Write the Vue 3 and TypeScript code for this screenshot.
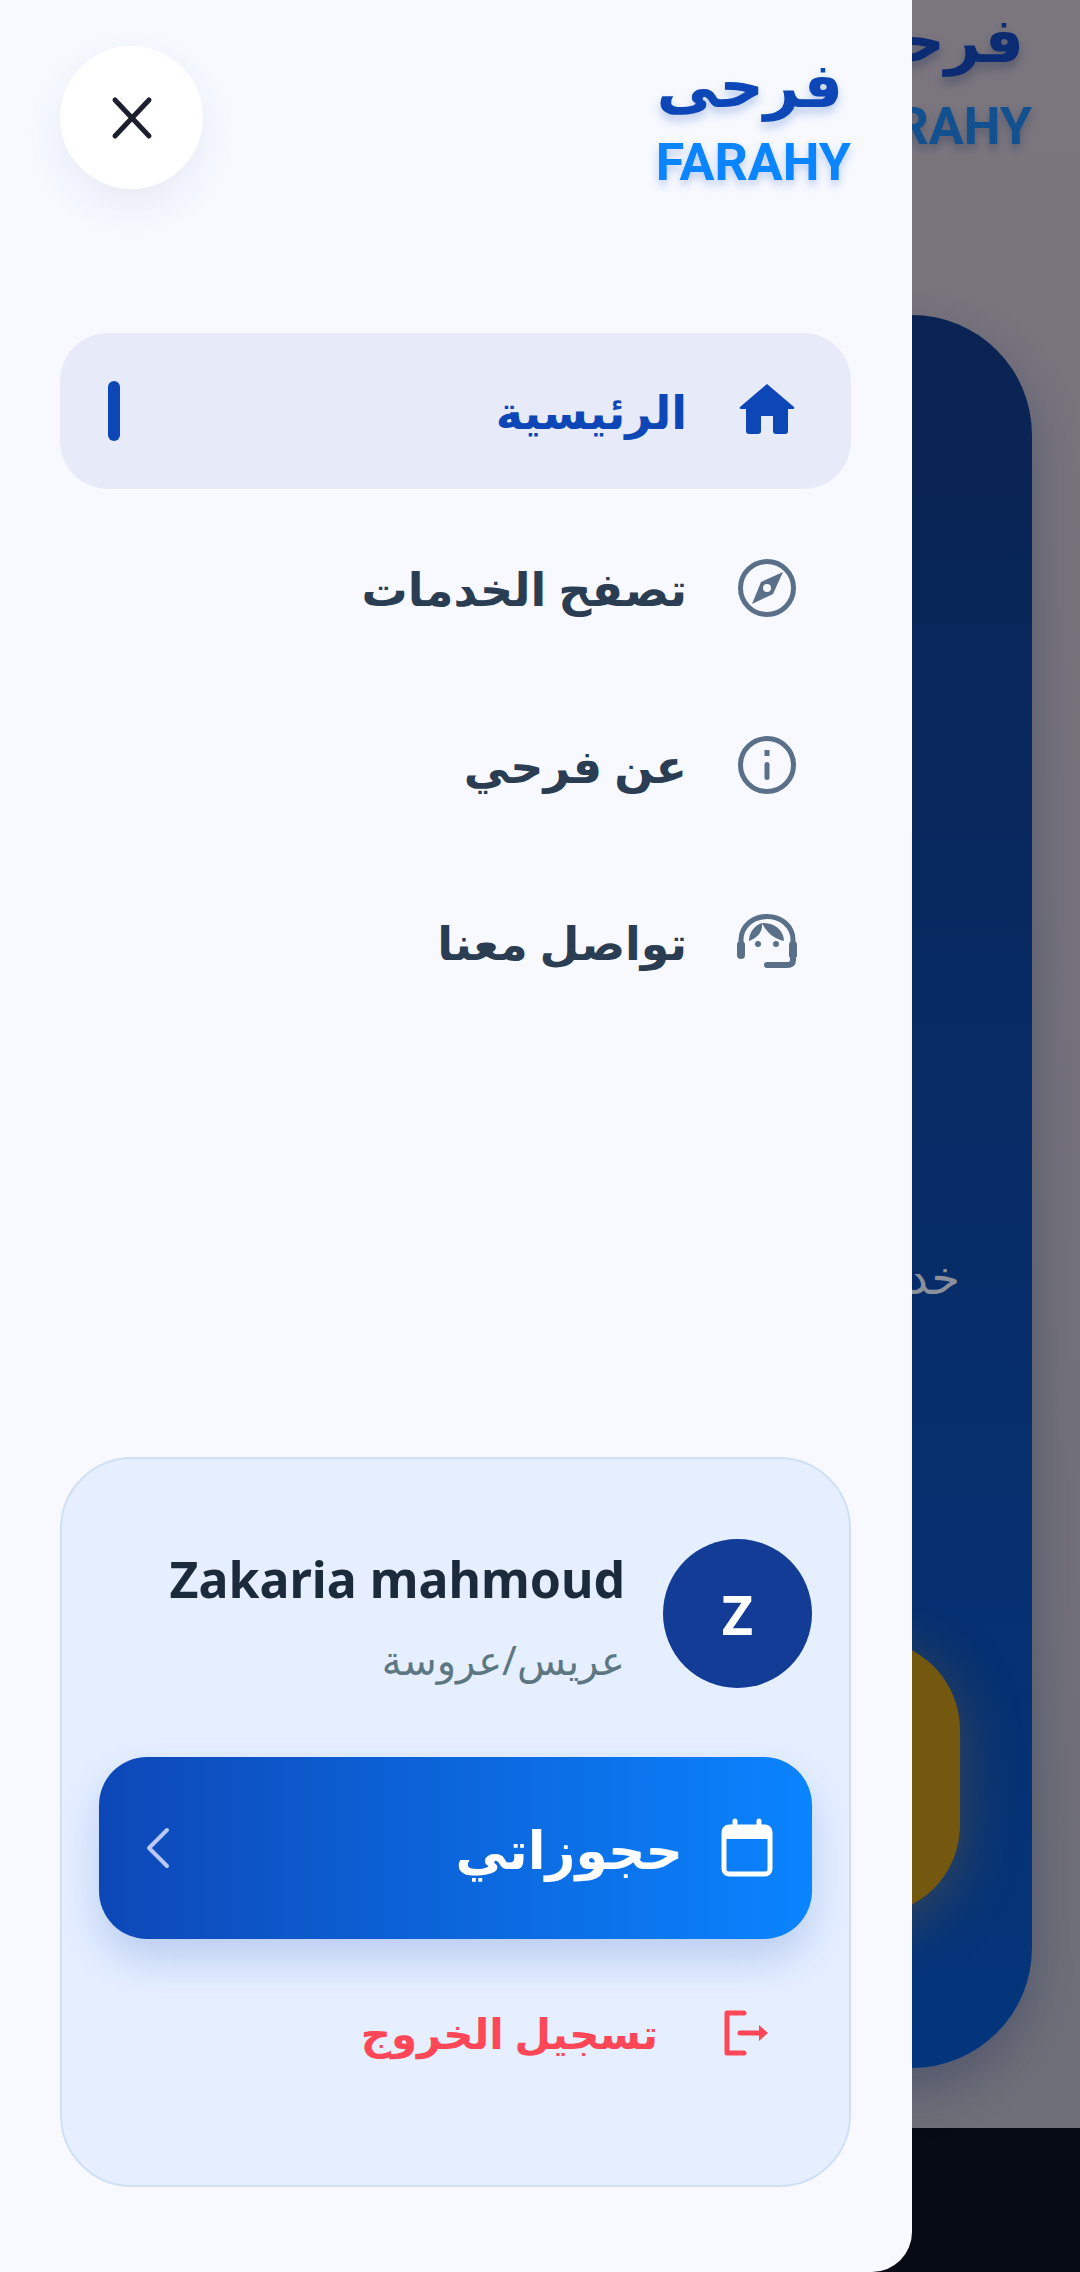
<template>
  <div class="screen" dir="rtl">
    <!-- page behind the drawer -->
    <div class="behind">
      <div class="behind-main">
        <div class="behind-logo">
          <span class="behind-ar">فرحي</span>
          <span class="behind-en">FARAHY</span>
        </div>
        <div class="hero">
          <span class="hero-text">خدمات</span>
          <div class="hero-btn"></div>
        </div>
      </div>
      <div class="behind-nav"></div>
    </div>

    <!-- drawer -->
    <aside class="drawer">
      <header class="top">
        <div class="logo">
          <span class="logo-ar">فرحى</span>
          <span class="logo-en">FARAHY</span>
        </div>
        <button class="close" aria-label="close">
          <svg width="44" height="44" viewBox="0 0 44 44" fill="none" stroke="#1c1f2e" stroke-width="5" stroke-linecap="round">
            <path d="M5 4 L39 40 M39 4 L5 40" />
          </svg>
        </button>
      </header>

      <nav class="nav">
        <a v-for="item in items" :key="item.label" class="nav-item" :class="{ active: item.active }">
          <svg class="nav-icon" width="64" height="64" viewBox="0 0 64 64" v-html="item.icon"></svg>
          <span class="nav-label">{{ item.label }}</span>
          <i v-if="item.active" class="marker"></i>
        </a>
      </nav>

      <section class="card">
        <div class="user">
          <div class="avatar">Z</div>
          <div class="user-text">
            <div class="name" dir="ltr">Zakaria mahmoud</div>
            <div class="role">عريس/عروسة</div>
          </div>
        </div>

        <button class="bookings">
          <svg width="56" height="60" viewBox="0 0 56 60" fill="none">
            <path d="M16 3 V10 M40 3 V10" stroke="#fff" stroke-width="5" stroke-linecap="round" />
            <rect x="5" y="9" width="46" height="47" rx="5" stroke="#fff" stroke-width="5" />
            <rect x="5" y="9" width="46" height="12" fill="#fff" />
          </svg>
          <span class="bookings-label">حجوزاتي</span>
          <svg class="chevron" width="26" height="42" viewBox="0 0 26 42" fill="none" stroke="#b9c8f7" stroke-width="4" stroke-linecap="round" stroke-linejoin="round">
            <path d="M22 3 L4 21 L22 39" />
          </svg>
        </button>

        <a class="logout">
          <svg width="46" height="46" viewBox="0 0 46 46" fill="none" stroke="#ff4757" stroke-width="5" stroke-linecap="round" stroke-linejoin="round">
            <path d="M20 3 H3 V43 H20" />
            <path d="M16 23 H36" />
            <path d="M35 15 L44 23 L35 31 Z" fill="#ff4757" stroke="none" />
          </svg>
          <span>تسجيل الخروج</span>
        </a>
      </section>
    </aside>
  </div>
</template>

<script setup lang="ts">
type NavItem = {
  label: string
  icon: string
  active?: boolean
}

const slate = '#5a7089'

const items: NavItem[] = [
  {
    label: 'الرئيسية',
    active: true,
    icon: '<path fill="#0d47b7" d="M32 5 L59 28 Q60 30 58 30 H53 V52 Q53 55 50 55 H41 Q38 55 38 52 V37 H26 V52 Q26 55 23 55 H14 Q11 55 11 52 V30 H6 Q4 30 5 28 Z"/>'
  },
  {
    label: 'تصفح الخدمات',
    icon: `<circle cx="32" cy="32" r="26.5" fill="none" stroke="${slate}" stroke-width="5"/><path fill="${slate}" d="M48 16 L38 38 L17 48 L26 26 Z"/><circle cx="32" cy="32" r="4" fill="#f7faff"/>`
  },
  {
    label: 'عن فرحي',
    icon: `<circle cx="32" cy="32" r="26.5" fill="none" stroke="${slate}" stroke-width="5"/><rect x="29.5" y="17" width="5" height="6" fill="${slate}"/><rect x="29.5" y="29" width="5" height="18" rx="2.5" fill="${slate}"/>`
  },
  {
    label: 'تواصل معنا',
    icon: `<path fill="none" stroke="${slate}" stroke-width="5" d="M6 34 V30 C6 16 18 6.5 32 6.5 C46 6.5 58 16 58 30 V34"/><rect x="2" y="31" width="8" height="18" rx="4" fill="${slate}"/><rect x="54" y="31" width="8" height="18" rx="4" fill="${slate}"/><path fill="none" stroke="${slate}" stroke-width="6" stroke-linecap="round" d="M32 55 H52 Q58 55 58 50 V46"/><path fill="${slate}" d="M14 31 C14 22 20 15 27 13 C28 21 23 28 14 31 Z M49 31 C49 21 40 12 27 13 C31 22 39 29 49 31 Z"/><circle cx="23" cy="34" r="3" fill="${slate}"/><circle cx="41" cy="34" r="3" fill="${slate}"/>`
  }
]
</script>

<style>
html,
body {
  margin: 0;
  background: #060b16;
}
</style>

<style scoped>
.screen {
  position: relative;
  width: 1080px;
  height: 2272px;
  overflow: hidden;
  font-family: "Noto Sans", "DejaVu Sans", sans-serif;
}

/* page behind */
.behind {
  display: flex;
  flex-direction: column;
  height: 100%;
}
.behind-main {
  flex: 1;
  box-sizing: border-box;
  padding: 0 48px 60px 48px;
  background: linear-gradient(180deg, #7b767e, #6f6f78);
}
.behind-logo {
  display: flex;
  flex-direction: column;
  height: 315px;
  text-align: right;
}
.behind-ar {
  font-size: 62px;
  line-height: 84px;
  font-weight: 700;
  color: #0b2c72;
  margin: -4px 8px 0 0;
  text-shadow: 0 6px 10px rgba(10, 30, 80, .3);
}
.behind-en {
  font-family: Roboto, sans-serif;
  font-size: 52px;
  line-height: 62px;
  font-weight: 700;
  color: #12508f;
  margin-top: 16px;
  text-shadow: 0 5px 8px rgba(10, 30, 80, .3);
}
.hero {
  position: relative;
  height: 1753px;
  border-radius: 120px;
  background: linear-gradient(180deg, #0a2352, #04357c);
  box-shadow: 0 20px 50px rgba(10, 30, 80, .3);
}
.hero-text {
  position: absolute;
  top: 930px;
  right: 72px;
  font-size: 46px;
  color: #8a8f9c;
}
.hero-btn {
  position: absolute;
  top: 1325px;
  right: 72px;
  width: 700px;
  height: 275px;
  border-radius: 90px;
  background: #75580f;
  box-shadow: 0 10px 60px rgba(160, 110, 20, .35);
}
.behind-nav {
  height: 144px;
  background: #060b16;
}

/* drawer */
.drawer {
  position: absolute;
  top: 0;
  left: 0;
  width: 912px;
  height: 2272px;
  box-sizing: border-box;
  padding: 46px 61px 85px 60px;
  display: flex;
  flex-direction: column;
  background: #f7f9ff;
  border-radius: 0 0 40px 0;
}
.top {
  display: flex;
  align-items: flex-start;
  justify-content: space-between;
  height: 287px;
}
.logo {
  display: flex;
  flex-direction: column;
  align-items: flex-start;
}
.logo-ar {
  font-size: 62px;
  line-height: 84px;
  font-weight: 700;
  color: #0d47b7;
  margin: -5px 8px 0 0;
  text-shadow: 0 6px 10px rgba(13, 71, 183, .25);
}
.logo-en {
  font-family: Roboto, sans-serif;
  font-size: 52px;
  line-height: 62px;
  font-weight: 700;
  color: #0a84ff;
  margin-top: 7px;
  text-shadow: 0 5px 8px rgba(13, 71, 183, .25);
}
.close {
  width: 143px;
  height: 143px;
  padding: 0;
  border: 0;
  border-radius: 50%;
  background: #fff;
  box-shadow: 0 16px 40px rgba(30, 50, 110, .07);
  display: flex;
  align-items: center;
  justify-content: center;
}
.nav {
  display: flex;
  flex-direction: column;
  gap: 21px;
}
.nav-item {
  display: flex;
  align-items: center;
  gap: 48px;
  height: 156px;
  box-sizing: border-box;
  padding: 0 52px 0 48px;
  border-radius: 48px;
}
.nav-item.active {
  background: #e6eaf9;
}
.nav-label {
  font-size: 46px;
  font-weight: 700;
  color: #2b3d52;
}
.active .nav-label {
  color: #0d47b7;
}
.marker {
  width: 12px;
  height: 60px;
  margin-right: auto;
  border-radius: 6px;
  background: #0d47b7;
}
.card {
  margin-top: auto;
  height: 730px;
  box-sizing: border-box;
  padding: 80px 37px 0 37px;
  border: 2px solid #cfe0f5;
  border-radius: 72px;
  background: #e5efff;
}
.user {
  display: flex;
  align-items: center;
  gap: 38px;
}
.avatar {
  width: 149px;
  height: 149px;
  border-radius: 50%;
  background: #123c96;
  color: #fff;
  font-size: 54px;
  font-weight: 700;
  display: flex;
  align-items: center;
  justify-content: center;
}
.user-text {
  display: flex;
  flex-direction: column;
  gap: 22px;
  padding-top: 5px;
}
.name {
  font-size: 50px;
  line-height: 66px;
  font-weight: 700;
  color: #1c2b3c;
}
.role {
  font-size: 40px;
  line-height: 52px;
  color: #5d7782;
}
.bookings {
  width: 100%;
  height: 182px;
  margin-top: 69px;
  padding: 0 37px 0 46px;
  border: 0;
  border-radius: 48px;
  background: linear-gradient(270deg, #0a84ff, #0d47b7);
  box-shadow: 0 20px 40px rgba(13, 71, 183, .2);
  display: flex;
  align-items: center;
  gap: 36px;
  font-family: inherit;
}
.bookings-label {
  font-size: 52px;
  font-weight: 600;
  color: #fff;
}
.chevron {
  margin-right: auto;
}
.logout {
  display: flex;
  align-items: center;
  gap: 66px;
  margin-top: 65px;
  padding-right: 42px;
  font-size: 42px;
  font-weight: 700;
  color: #ff4757;
}
</style>
